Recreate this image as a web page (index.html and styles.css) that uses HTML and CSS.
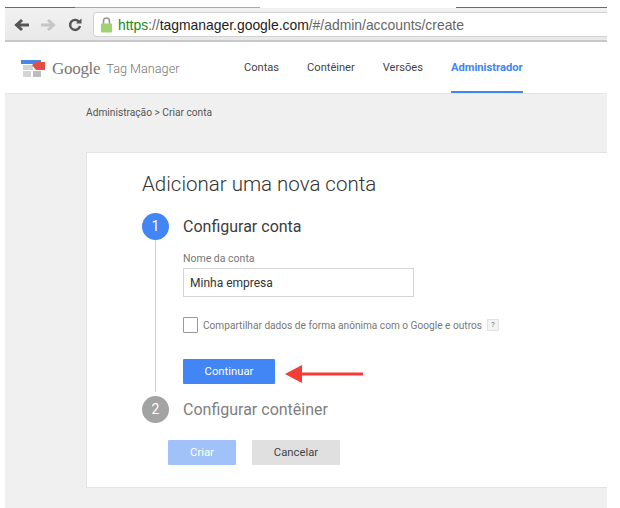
FILE: index.html
```html
<!DOCTYPE html>
<html lang="en">
<head>
    <meta charset="UTF-8">
    <title>Google Tag Manager</title>
    <link rel="stylesheet" href="styles.css">
</head>
<body>
    <div class="window">
        <!-- Browser chrome -->
        <div class="tab-edge">
            <span class="edge-dark edge-a"></span>
            <span class="edge-grey"></span>
            <span class="edge-gap"></span>
            <span class="edge-dark edge-b"></span>
        </div>
        <div class="toolbar">
            <div class="nav-icons">
                <svg width="18" height="14" viewBox="0 0 18 14"><path d="M16 7H4M9 2L3.500 7L9 12" fill="none" stroke="#555" stroke-width="3"/></svg>
                <svg width="18" height="14" viewBox="0 0 18 14"><path d="M2 7H14M9 2L14.500 7L9 12" fill="none" stroke="#c6c6c6" stroke-width="3"/></svg>
                <svg width="14" height="14" viewBox="0 0 14 14"><path d="M11.500 4.500A5 5 0 1 0 12 8" fill="none" stroke="#555" stroke-width="2.400"/><path d="M8 5.500H13.500V0.500Z" fill="#555"/></svg>
            </div>
            <div class="address">
                <svg width="13" height="17" viewBox="0 0 13 17"><path d="M3.500 8V5A3 3 0 0 1 9.500 5V8" fill="none" stroke="#9a9a8a" stroke-width="1.600"/><rect x="1" y="7.500" width="11" height="9" rx="1" fill="#9ed26f"/></svg>
                <span class="url"><span class="https">https</span>://<span class="host">tagmanager.google.com</span>/#/admin/accounts/create</span>
            </div>
        </div>

        <!-- App header -->
        <div class="app-header">
            <div class="brand">
                <svg width="24" height="17" viewBox="0 0 24 17">
                    <rect x="0" y="0" width="20" height="4" fill="#4a86e8"/>
                    <rect x="2" y="5" width="10" height="5" fill="#d4d4d4"/>
                    <rect x="2" y="11" width="8" height="6" fill="#d4d4d4"/>
                    <rect x="12" y="11" width="8" height="6" fill="#bdbdbd"/>
                    <path d="M11 5L15 2H24V10H15Z" fill="#e54d42"/>
                </svg>
                <span class="google">Google</span>
                <span class="product">Tag Manager</span>
            </div>
            <nav class="tabs">
                <a class="tab">Contas</a>
                <a class="tab">Contêiner</a>
                <a class="tab">Versões</a>
                <a class="tab active">Administrador</a>
            </nav>
        </div>

        <!-- Page content -->
        <div class="content">
            <div class="breadcrumb">Administração &gt; Criar conta</div>
            <div class="card">
                <h1 class="card-title">Adicionar uma nova conta</h1>
                <div class="step">
                    <div class="step-rail">
                        <span class="step-num">1</span>
                        <span class="step-line"></span>
                    </div>
                    <div class="step-body">
                        <h2 class="step-title">Configurar conta</h2>
                        <label class="field-label" for="account-name">Nome da conta</label>
                        <input class="field-input" id="account-name" type="text" value="Minha empresa">
                        <div class="share-row">
                            <span class="checkbox"></span>
                            <span class="share-text">Compartilhar dados de forma anônima com o Google e outros</span>
                            <span class="help">?</span>
                        </div>
                        <div class="continue-row">
                            <button class="btn btn-primary">Continuar</button>
                            <svg class="arrow" width="78" height="18" viewBox="0 0 78 18"><path d="M78 7.500H17V0L0 9L17 18V10.500H78Z" fill="#f43b36"/></svg>
                        </div>
                    </div>
                </div>
                <div class="step step-off">
                    <div class="step-rail">
                        <span class="step-num">2</span>
                    </div>
                    <div class="step-body">
                        <h2 class="step-title">Configurar contêiner</h2>
                    </div>
                </div>
                <div class="actions">
                    <button class="btn btn-disabled">Criar</button>
                    <button class="btn btn-cancel">Cancelar</button>
                </div>
            </div>
        </div>
    </div>
</body>
</html>
```

FILE: styles.css
```css
html, body {
    margin: 0;
    padding: 0;
    background-color: white;
}

body {
    font-family: Roboto, "Liberation Sans", sans-serif;
    height: 508px;
    overflow: hidden;
}

.window {
    width: 602px;
    height: 508px;
    margin-left: 5px;
    display: flex;
    flex-direction: column;
}

.tab-edge {
    height: 8px;
    box-sizing: border-box;
    display: flex;
    align-items: flex-end;
}

.tab-edge span {
    height: 1px;
}

.edge-dark {
    background-color: #5f6b78;
}

.edge-a {
    width: 70px;
}

.edge-grey {
    width: 185px;
    background-color: #a9a9a9;
}

.edge-gap {
    width: 196px;
}

.edge-b {
    flex: 1;
}

.toolbar {
    height: 34px;
    box-sizing: border-box;
    padding-top: 1px;
    display: flex;
    align-items: center;
    background: linear-gradient(#f1f1f1, #e9e9e9);
    border-bottom: 2px solid #c8c8c8;
}

.nav-icons {
    width: 88px;
    box-sizing: border-box;
    padding-left: 8px;
    display: flex;
    align-items: center;
    gap: 8px;
}

.nav-icons svg:last-child {
    margin-left: 3px;
}

.address {
    flex: 1;
    height: 25px;
    box-sizing: border-box;
    background-color: white;
    border: 1px solid #d2d2d2;
    border-right: none;
    border-radius: 4px 0 0 4px;
    display: flex;
    align-items: center;
    gap: 5px;
    padding-left: 6px;
}

.url {
    font-family: "Liberation Sans", sans-serif;
    font-size: 13.900px;
    color: #666;
}

.https {
    color: #1c8a1c;
}

.host {
    color: #222;
}

.app-header {
    height: 52px;
    box-sizing: border-box;
    display: flex;
    align-items: stretch;
    border-bottom: 1px solid #e4e4e4;
}

.brand {
    width: 239px;
    box-sizing: border-box;
    padding-left: 16px;
    padding-top: 2px;
    display: flex;
    align-items: center;
}

.google {
    font-family: "Liberation Serif", serif;
    font-size: 17px;
    color: #777;
    margin-left: 7px;
    letter-spacing: -0.3px;
}

.product {
    font-size: 12.700px;
    font-weight: 300;
    color: #777;
    margin-left: 6px;
}

.tabs {
    display: flex;
    gap: 28px;
}

.tab {
    font-size: 11.100px;
    color: #444;
    padding-top: 3px;
    height: 46px;
    line-height: 46px;
    border-bottom: 2px solid transparent;
}

.tab.active {
    color: #4285f4;
    font-weight: 700;
    font-size: 11.200px;
    border-bottom-color: #4285f4;
}

.content {
    flex: 1;
    background-color: #f0f0f0;
    padding-left: 81px;
    min-height: 0;
}

.breadcrumb {
    font-size: 10.200px;
    color: #555;
    padding-top: 13px;
    line-height: 12px;
    margin-bottom: 33px;
}

.card {
    height: 336px;
    box-sizing: border-box;
    background-color: white;
    border: 1px solid #e4e4e4;
    border-right: none;
    padding: 19px 0 0 55px;
}

.card-title {
    margin: 0 0 17px;
    font-size: 20.500px;
    font-weight: 300;
    line-height: 24px;
    color: #333;
}

.step {
    display: flex;
    gap: 14px;
}

.step-rail {
    width: 27px;
    display: flex;
    flex-direction: column;
    align-items: center;
}

.step-num {
    width: 27px;
    height: 27px;
    flex: none;
    border-radius: 50%;
    background-color: #4285f4;
    color: white;
    font-size: 14px;
    line-height: 27px;
    text-align: center;
}

.step-line {
    width: 1px;
    flex: 1;
    margin-bottom: 4px;
    background-color: #cfcfcf;
}

.step-off .step-num {
    background-color: #a3a3a3;
}

.step-title {
    margin: 0;
    font-size: 16px;
    font-weight: 400;
    line-height: 27px;
    color: #3c3c3c;
}

.step-off .step-title {
    color: #808080;
}

.field-label {
    display: block;
    margin-top: 13px;
    font-size: 10.500px;
    line-height: 12px;
    color: #777;
}

.field-input {
    display: block;
    width: 231px;
    height: 29px;
    box-sizing: border-box;
    margin-top: 3px;
    padding: 0 6px;
    border: 1px solid #d4d4d4;
    font-family: Roboto, sans-serif;
    font-size: 12px;
    color: #333;
    outline: none;
}

.share-row {
    display: flex;
    align-items: center;
    margin-top: 20px;
    height: 16px;
}

.checkbox {
    width: 13px;
    height: 14px;
    border: 1px solid #999;
    border-radius: 1px;
}

.share-text {
    margin-left: 5px;
    padding-top: 1px;
    font-size: 10.150px;
    color: #777;
}

.help {
    margin-left: 5px;
    width: 10px;
    height: 10px;
    background-color: #f3f3f3;
    border: 1px solid #e2e2e2;
    font-size: 8px;
    line-height: 10px;
    text-align: center;
    color: #777;
}

.continue-row {
    position: relative;
    margin-top: 26px;
    padding-bottom: 12px;
}

.arrow {
    position: absolute;
    left: 102px;
    top: 6px;
}

.btn {
    display: block;
    height: 25px;
    padding: 0;
    border: none;
    border-radius: 1px;
    font-family: Roboto, sans-serif;
    font-size: 11.300px;
    font-weight: 400;
}

.btn-primary {
    width: 92px;
    background-color: #4285f4;
    color: white;
}

.actions {
    display: flex;
    gap: 16px;
    margin-top: 17px;
    margin-left: 26px;
}

.btn-disabled {
    width: 68px;
    background-color: #a0c2f9;
    color: white;
}

.btn-cancel {
    width: 88px;
    background-color: #e0e0e0;
    color: #444;
}
```
